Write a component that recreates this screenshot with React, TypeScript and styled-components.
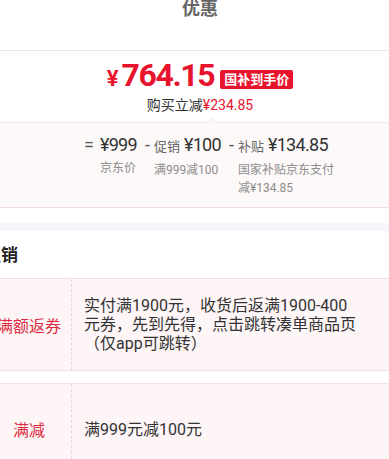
import styled, { createGlobalStyle } from 'styled-components'

const GlobalStyle = createGlobalStyle`
  html, body {
    margin: 0;
    padding: 0;
    background: #fff;
    overflow: hidden;
  }
  body {
    font-family: Roboto, "Noto Sans CJK SC", sans-serif;
    color: #333;
  }
`

const Panel = styled.div`
  width: 426px;
  margin-left: -13px;
`

const Title = styled.div`
  box-sizing: border-box;
  margin-top: -3px;
  height: 54px;
  border-bottom: 1px solid #e6e6e6;
  text-align: center;
  font-size: 18px;
  line-height: 24px;
  font-weight: 700;
  color: #666;
`

const PriceBlock = styled.div`
  padding-top: 8px;
  text-align: center;
`

const PriceRow = styled.div`
  display: flex;
  justify-content: center;
  align-items: center;
  height: 36px;
`

const PriceValue = styled.span`
  color: #e8132d;
  font-size: 32px;
  line-height: 36px;
  font-weight: 700;
  letter-spacing: -1.4px;

  small {
    font-size: 22px;
    margin-right: 3px;
    letter-spacing: 0;
  }
`

const Badge = styled.span`
  margin: 5px 0 0 6px;
  padding: 0 4px;
  height: 19px;
  line-height: 19px;
  border-radius: 2px;
  background: #e8132d;
  color: #fff;
  font-size: 13px;
  font-weight: 700;
`

const SubLine = styled.div`
  font-size: 14px;
  line-height: 20px;
  color: #333;

  em {
    font-style: normal;
    color: #e8132d;
  }
`

const Breakdown = styled.div`
  position: relative;
  margin-top: 7px;
  display: flex;
  align-items: flex-start;
  padding: 10px 0 10px 97px;
  background: #fdf9f9;
  border-top: 1px solid #f1e8e8;
  border-bottom: 1px solid #f4dde0;
`

const Caret = styled.span`
  position: absolute;
  top: -5px;
  left: 221px;
  width: 0;
  height: 0;
  border-left: 5px solid transparent;
  border-right: 5px solid transparent;
  border-bottom: 5px solid #f1e8e8;

  &::after {
    content: '';
    position: absolute;
    top: 1px;
    left: -4px;
    border-left: 4px solid transparent;
    border-right: 4px solid transparent;
    border-bottom: 4px solid #fdf9f9;
  }
`

const Op = styled.span<{ $first?: boolean }>`
  font-size: 18px;
  line-height: 24px;
  color: #555;
  margin: ${({ $first }) => ($first ? '0 6px 0 0' : '0 4px 0 8px')};
`

const Col = styled.div<{ $width?: number }>`
  display: flex;
  flex-direction: column;
  ${({ $width }) => ($width ? `width: ${$width}px;` : '')}
`

const Amount = styled.div`
  font-size: 18px;
  line-height: 24px;
  color: #333;
  white-space: nowrap;
  letter-spacing: -0.7px;

  span {
    font-size: 13px;
    color: #666;
    margin-right: 4px;
    letter-spacing: 0;
  }
`

const Desc = styled.div`
  margin-top: 2px;
  font-size: 12px;
  line-height: 18px;
  color: #8c8c8c;
`

const Band = styled.div`
  margin-top: 15px;
  height: 8px;
  background: #f6f7fb;
`

const Heading = styled.div`
  margin: 12px 0 11px -3px;
  font-size: 17px;
  line-height: 24px;
  font-weight: 700;
  color: #222;
`

const Table = styled.div`
  display: flex;
  flex-direction: column;
  gap: 12px;
`

const Row = styled.div`
  box-sizing: border-box;
  display: grid;
  grid-template-columns: 85px 1fr;
  min-height: 92px;
  background: #fdf5f6;
  border-top: 1px solid #f4dfe2;
  border-bottom: 1px solid #f4dfe2;
`

const Label = styled.div`
  display: flex;
  align-items: center;
  justify-content: center;
  border-right: 1px dashed #ead6d9;
  color: #de2a40;
  font-size: 16px;
`

const Content = styled.div`
  display: flex;
  align-items: center;
  padding: 17px 53px 17px 12px;
  font-size: 16px;
  line-height: 19px;
  color: #333;
`

const promos = [
  { label: '满额返券', text: '实付满1900元，收货后返满1900-400元券，先到先得，点击跳转凑单商品页（仅app可跳转）' },
  { label: '满减', text: '满999元减100元' },
]

export default function App() {
  return (
    <>
      <GlobalStyle />
      <Panel>
        <Title>优惠</Title>
        <PriceBlock>
          <PriceRow>
            <PriceValue><small>¥</small>764.15</PriceValue>
            <Badge>国补到手价</Badge>
          </PriceRow>
          <SubLine>购买立减<em>¥234.85</em></SubLine>
        </PriceBlock>

        <Breakdown>
          <Caret />
          <Op $first>=</Op>
          <Col>
            <Amount>¥999</Amount>
            <Desc>京东价</Desc>
          </Col>
          <Op>-</Op>
          <Col>
            <Amount><span>促销</span>¥100</Amount>
            <Desc>满999减100</Desc>
          </Col>
          <Op>-</Op>
          <Col $width={100}>
            <Amount><span>补贴</span>¥134.85</Amount>
            <Desc>国家补贴京东支付减¥134.85</Desc>
          </Col>
        </Breakdown>

        <Band />
        <Heading>促销</Heading>

        <Table>
          {promos.map((p) => (
            <Row key={p.label}>
              <Label>{p.label}</Label>
              <Content>{p.text}</Content>
            </Row>
          ))}
        </Table>
      </Panel>
    </>
  )
}
